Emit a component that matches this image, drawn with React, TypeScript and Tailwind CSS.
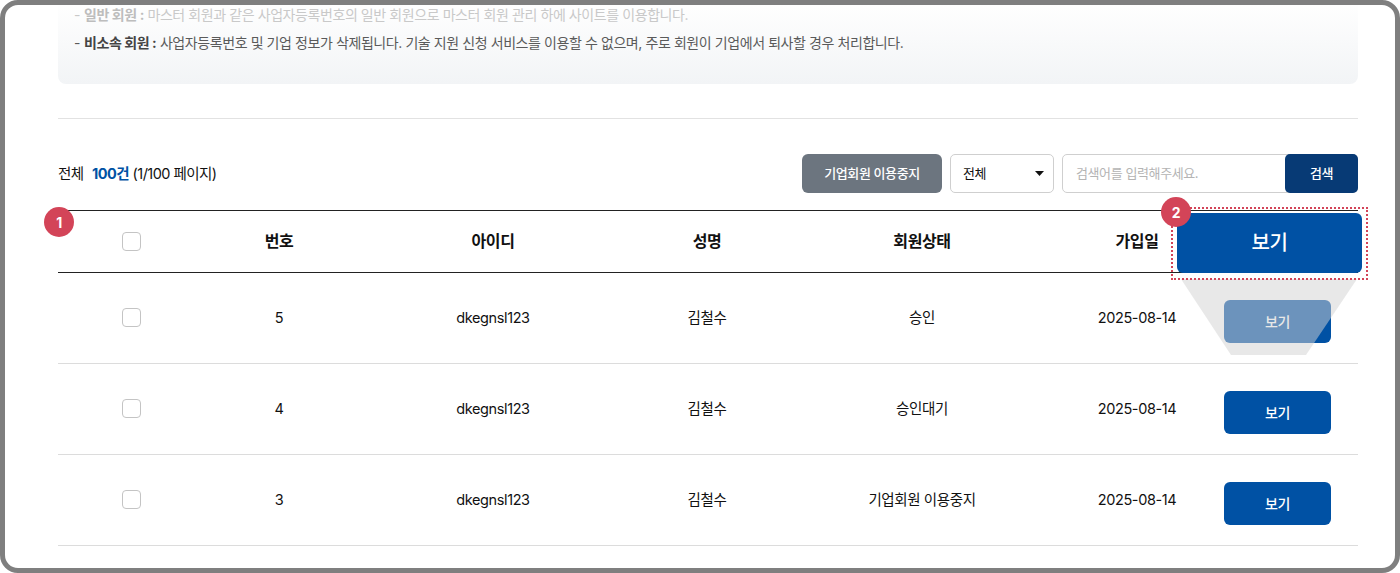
import React from 'react';

interface Member {
  no: number;
  id: string;
  name: string;
  status: string;
  joined: string;
}

const members: Member[] = [
  { no: 5, id: 'dkegnsl123', name: '김철수', status: '승인', joined: '2025-08-14' },
  { no: 4, id: 'dkegnsl123', name: '김철수', status: '승인대기', joined: '2025-08-14' },
  { no: 3, id: 'dkegnsl123', name: '김철수', status: '기업회원 이용중지', joined: '2025-08-14' },
];

const gridCols = 'grid grid-cols-[146px_150px_278px_150px_280px_150px_146px] items-center text-center';

function Checkbox() {
  return <div className="w-[19px] h-[19px] ml-[64px] bg-white border border-[#c4c4c4] rounded-[4px]" />;
}

function Badge({ label, className }: { label: string; className: string }) {
  return (
    <span className={`absolute w-[30px] h-[30px] rounded-full bg-[#d34458] text-white text-[14px] font-bold flex items-center justify-center ${className}`}>
      {label}
    </span>
  );
}

export default function App() {
  return (
    <div className="relative w-[1400px] h-[573px] overflow-hidden bg-white text-[#111] font-['Inter','Noto_Sans_CJK_KR',sans-serif] tracking-[-0.4px]">
      <div className="ml-[58px] mr-[42px]">
        {/* 안내 박스 */}
        <div className="h-[84px] pt-[1px] pl-[16px] rounded-b-[8px] bg-gradient-to-b from-white to-[#f2f4f6] text-[14px] leading-[28px] tracking-[-0.42px] text-[#5a5a5a]">
          <p className="text-[#c9c9c9]">
            <span className="mr-[4px]">-</span>
            <b className="font-bold text-[#bdbdbd]">일반 회원 :</b> 마스터 회원과 같은 사업자등록번호의 일반 회원으로 마스터 회원 관리 하에 사이트를 이용합니다.
          </p>
          <p>
            <span className="mr-[4px]">-</span>
            <b className="font-bold text-[#444]">비소속 회원 :</b> 사업자등록번호 및 기업 정보가 삭제됩니다. 기술 지원 신청 서비스를 이용할 수 없으며, 주로 회원이 기업에서 퇴사할 경우 처리합니다.
          </p>
        </div>

        <div className="mt-[34px] border-t border-[#e2e2e2]" />

        {/* 검색 영역 */}
        <div className="mt-[35px] h-[39px] flex items-center justify-between">
          <p className="text-[14.5px] tracking-[-0.55px]">
            전체 <span className="ml-[5px] font-bold text-[#0052a4]">100건</span> (1/100 페이지)
          </p>
          <div className="flex items-center">
            <button className="w-[140px] h-[39px] rounded-[6px] bg-[#6c757f] text-white text-[13px] font-medium">
              기업회원 이용중지
            </button>
            <div className="ml-[8px] w-[104px] h-[39px] pl-[12px] pr-[9px] flex items-center justify-between border border-[#cfcfcf] rounded-[5px] text-[13px]">
              전체
              <svg width="9" height="5" viewBox="0 0 9 5"><path d="M0 0h9L4.5 5z" fill="#111" /></svg>
            </div>
            <div className="ml-[8px] w-[296px] h-[39px] flex border border-[#cfcfcf] rounded-[5px]">
              <input
                placeholder="검색어를 입력해주세요."
                className="flex-1 min-w-0 pl-[13px] text-[13px] outline-none bg-transparent placeholder:text-[#b4b4b4]"
              />
              <button className="-m-px w-[73px] h-[39px] rounded-[5px] bg-[#073a75] text-white text-[13px] font-medium">검색</button>
            </div>
          </div>
        </div>

        {/* 회원 목록 */}
        <div className="mt-[17px] border-t border-[#222]">
          <div className={`${gridCols} h-[62px] pb-[1px] border-b border-[#222] text-[16px] font-bold`}>
            <Checkbox />
            <span>번호</span>
            <span>아이디</span>
            <span>성명</span>
            <span>회원상태</span>
            <span>가입일</span>
            <span />
          </div>
          {members.map(m => (
            <div key={m.no} className={`${gridCols} h-[91px] pb-[2px] border-b border-[#dcdcdc] text-[14.5px] [&>span]:mt-[2px]`}>
              <Checkbox />
              <span>{m.no}</span>
              <span>{m.id}</span>
              <span>{m.name}</span>
              <span>{m.status}</span>
              <span>{m.joined}</span>
              <button className="ml-[12px] mt-[8px] w-[107px] h-[43px] rounded-[6px] bg-[#0051a4] text-white text-[14px] font-medium">
                보기
              </button>
            </div>
          ))}
        </div>
      </div>

      {/* 주석 오버레이 */}
      <svg className="absolute left-[1170px] top-[270px]" width="200" height="90" viewBox="0 0 200 90">
        <polygon points="11,9 187,9 136,85 61,85" fill="rgb(210 210 210 / 0.514)" />
      </svg>
      <div className="absolute left-[1171px] top-[207px] w-[197px] h-[73px] border-2 border-dotted border-[#d34458]" />
      <button className="absolute left-[1177px] top-[213px] w-[185px] h-[60px] rounded-[6px] bg-[#0051a4] text-white text-[20px] font-medium">
        보기
      </button>
      <Badge label="1" className="left-[44px] top-[207px]" />
      <Badge label="2" className="left-[1161px] top-[197px]" />

      {/* 캡처 테두리 */}
      <div className="absolute inset-0 border-[5px] border-[#7f7f7f] rounded-[18px] pointer-events-none" />
    </div>
  );
}
